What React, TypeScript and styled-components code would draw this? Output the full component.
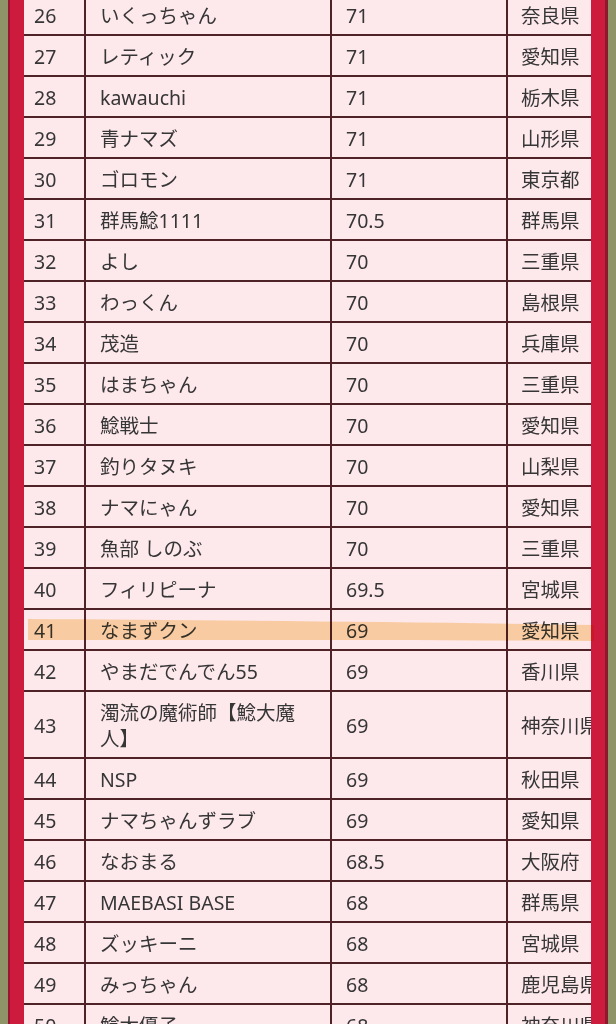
import React from "react";
import styled, { createGlobalStyle } from "styled-components";

const Global = createGlobalStyle`
  html, body { margin: 0; padding: 0; }
  body {
    background: #8f9468;
    height: 1024px;
    overflow: hidden;
    font-family: "Noto Sans", "Noto Sans CJK JP", sans-serif;
  }
`;

const Page = styled.div`
  position: relative;
  margin: 0 8px;
  height: 1024px;
  overflow: hidden;
  background: #cc1b3d;
  border-left: 2px solid #9c1530;
  border-right: 3px solid #8a1a2c;
  padding: 0 14px;
`;

const Clip = styled.div`
  width: 567px;
  height: 1024px;
  overflow: hidden;
  background: #fde8ec;
`;

const Table = styled.table`
  width: 583px;
  table-layout: fixed;
  border-collapse: collapse;
  margin-top: -7px;
  background: #fde8ec;
  color: #363636;
  font-size: 19.5px;
  font-weight: 400;
  line-height: 26px;
`;

const Row = styled.tr`
  border-top: 2px solid #4f2228;
  border-bottom: 2px solid #4f2228;
`;

const Cell = styled.td<{ $pl: number; $pr?: number }>`
  padding: 8px ${(p) => p.$pr ?? 6}px 5px ${(p) => p.$pl}px;
  vertical-align: middle;
  border-left: 2px solid #4f2228;
  white-space: normal;
  word-break: break-all;
  &:first-child { border-left: none; }
`;

const Marker = styled.svg`
  position: absolute;
  left: 0;
  top: 608px;
  width: 616px;
  height: 44px;
  pointer-events: none;
  mix-blend-mode: multiply;
`;

const rows: [string, string, string, string][] = [
  ["26", "いくっちゃん", "71", "奈良県"],
  ["27", "レティック", "71", "愛知県"],
  ["28", "kawauchi", "71", "栃木県"],
  ["29", "青ナマズ", "71", "山形県"],
  ["30", "ゴロモン", "71", "東京都"],
  ["31", "群馬鯰1111", "70.5", "群馬県"],
  ["32", "よし", "70", "三重県"],
  ["33", "わっくん", "70", "島根県"],
  ["34", "茂造", "70", "兵庫県"],
  ["35", "はまちゃん", "70", "三重県"],
  ["36", "鯰戦士", "70", "愛知県"],
  ["37", "釣りタヌキ", "70", "山梨県"],
  ["38", "ナマにゃん", "70", "愛知県"],
  ["39", "魚部 しのぶ", "70", "三重県"],
  ["40", "フィリピーナ", "69.5", "宮城県"],
  ["41", "なまずクン", "69", "愛知県"],
  ["42", "やまだでんでん55", "69", "香川県"],
  ["43", "濁流の魔術師【鯰大魔人】", "69", "神奈川県"],
  ["44", "NSP", "69", "秋田県"],
  ["45", "ナマちゃんずラブ", "69", "愛知県"],
  ["46", "なおまる", "68.5", "大阪府"],
  ["47", "MAEBASI BASE", "68", "群馬県"],
  ["48", "ズッキーニ", "68", "宮城県"],
  ["49", "みっちゃん", "68", "鹿児島県"],
  ["50", "鯰太優子", "68", "神奈川県"],
];

export default function App() {
  return (
    <>
      <Global />
      <Page>
        <Clip>
          <Table>
            <colgroup>
              <col style={{ width: 61 }} />
              <col style={{ width: 246 }} />
              <col style={{ width: 176 }} />
              <col style={{ width: 100 }} />
            </colgroup>
            <tbody>
              {rows.map((r) => (
                <Row key={r[0]}>
                  <Cell $pl={10}>{r[0]}</Cell>
                  <Cell $pl={14} $pr={28}>{r[1]}</Cell>
                  <Cell $pl={14}>{r[2]}</Cell>
                  <Cell $pl={13} $pr={0}>{r[3]}</Cell>
                </Row>
              ))}
            </tbody>
          </Table>
        </Clip>
      </Page>
      <Marker viewBox="0 0 616 44">
        <path
          d="M28 11 C 200 12, 420 14, 594 17 L 594 33 C 420 32, 200 32, 28 32 Z"
          fill="#f8c670"
          opacity="0.55"
        />
      </Marker>
    </>
  );
}
